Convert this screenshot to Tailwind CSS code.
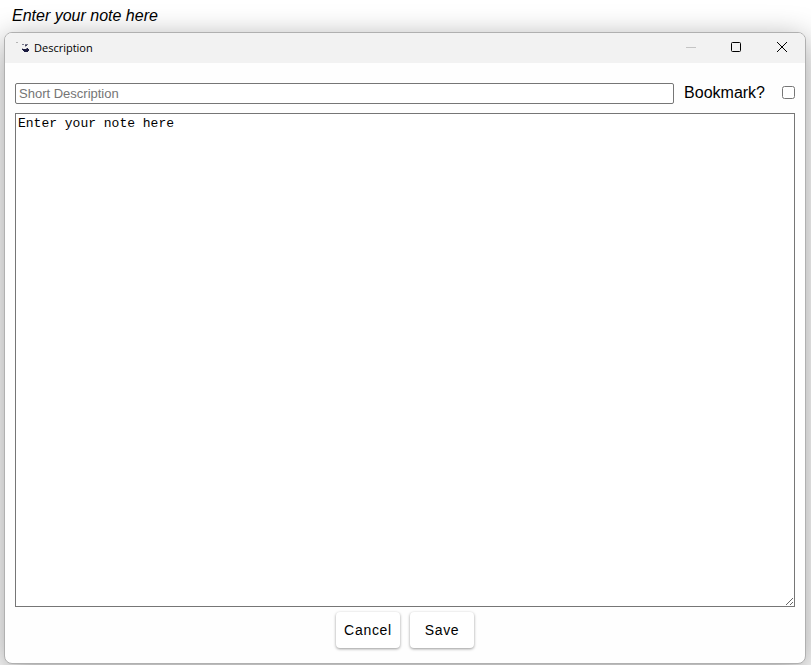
<!DOCTYPE html>
<html lang="en">
<head>
    <meta charset="UTF-8">
    <meta name="viewport" content="width=device-width, initial-scale=1.0">
    <title>Description</title>
    <script src="https://cdn.jsdelivr.net/npm/@tailwindcss/browser@4"></script>
</head>
<body class="flex flex-col h-screen overflow-hidden bg-white text-black font-['Liberation_Sans',Arial,sans-serif]">
    <p class="h-8 shrink-0 pl-3 pt-1 text-base leading-6 italic">Enter your note here</p>

    <!-- Note window -->
    <div class="flex flex-col flex-1 min-h-0 ml-1 mr-[5px] mb-px rounded-lg border border-[#b0b0b0] bg-[#fefefe] overflow-hidden shadow-[0_8px_32px_rgba(0,0,0,0.4)]">
        <!-- Title bar -->
        <header class="flex items-center h-[30px] shrink-0 bg-[#f2f2f2] pl-[11px]">
            <svg class="w-4 h-4 mr-0.5" viewBox="0 0 16 16" fill="none">
                <path d="M0 2.5h2" stroke="#b5b5b5"/>
                <path d="M6 4.5h2M9 4.5h3" stroke="#77778a"/>
                <path d="M9 5.5h2" stroke="#44445c"/>
                <path d="M9 6.5h1M6 8.5h1" stroke="#a5a5b2"/>
                <path d="M6 9h4l1-1h1v1h1v2h-1v1H8v-1H7v-1H6z" fill="#1b1b40"/>
            </svg>
            <h1 class="text-[11px] font-['Open_Sans','Noto_Sans',sans-serif]">Description</h1>
            <div class="flex ml-auto h-full">
                <button type="button" aria-label="Minimize" class="flex items-center justify-center w-[45px]" disabled>
                    <svg class="w-3 h-3" viewBox="0 0 12 12" stroke="#c4c4c4"><path d="M1 5.5h10"/></svg>
                </button>
                <button type="button" aria-label="Maximize" class="flex items-center justify-center w-[45px]">
                    <svg class="w-3 h-3" viewBox="0 0 12 12" fill="none" stroke="#000"><rect x="1.5" y="0.5" width="9" height="9" rx="1"/></svg>
                </button>
                <button type="button" aria-label="Close" class="flex items-center justify-center w-[47px]">
                    <svg class="w-3 h-3" viewBox="0 0 12 12" stroke="#000"><path d="M1 0l10 10M11 0L1 10"/></svg>
                </button>
            </div>
        </header>

        <!-- Note form -->
        <form class="flex flex-col flex-1 min-h-0 px-[10px] pt-5 pb-[15px]">
            <div class="flex items-center">
                <input type="text" aria-label="Short Description" placeholder="Short Description" class="flex-1 h-[21px] px-[3px] border border-[#767676] rounded-xs bg-white text-[13px] placeholder:text-[#757575]">
                <label for="bookmark" class="ml-[10px] mr-[17px] pb-px leading-5">Bookmark?</label>
                <input type="checkbox" id="bookmark" class="w-[13px] h-[13px] mb-0.5">
            </div>
            <textarea aria-label="Note" class="flex-1 min-h-0 mt-[9px] p-0.5 border border-[#767676] bg-white text-[13px] leading-[15px] font-['Liberation_Mono',monospace] resize">Enter your note here</textarea>
            <div class="flex justify-center gap-[10px] mt-[5px]">
                <button type="button" class="w-16 h-9 rounded bg-white text-sm tracking-wider shadow-[0_1px_3px_rgba(0,0,0,0.4)]">Cancel</button>
                <button type="submit" class="w-16 h-9 rounded bg-white text-sm tracking-wider shadow-[0_1px_3px_rgba(0,0,0,0.4)]">Save</button>
            </div>
        </form>
    </div>
</body>
</html>
